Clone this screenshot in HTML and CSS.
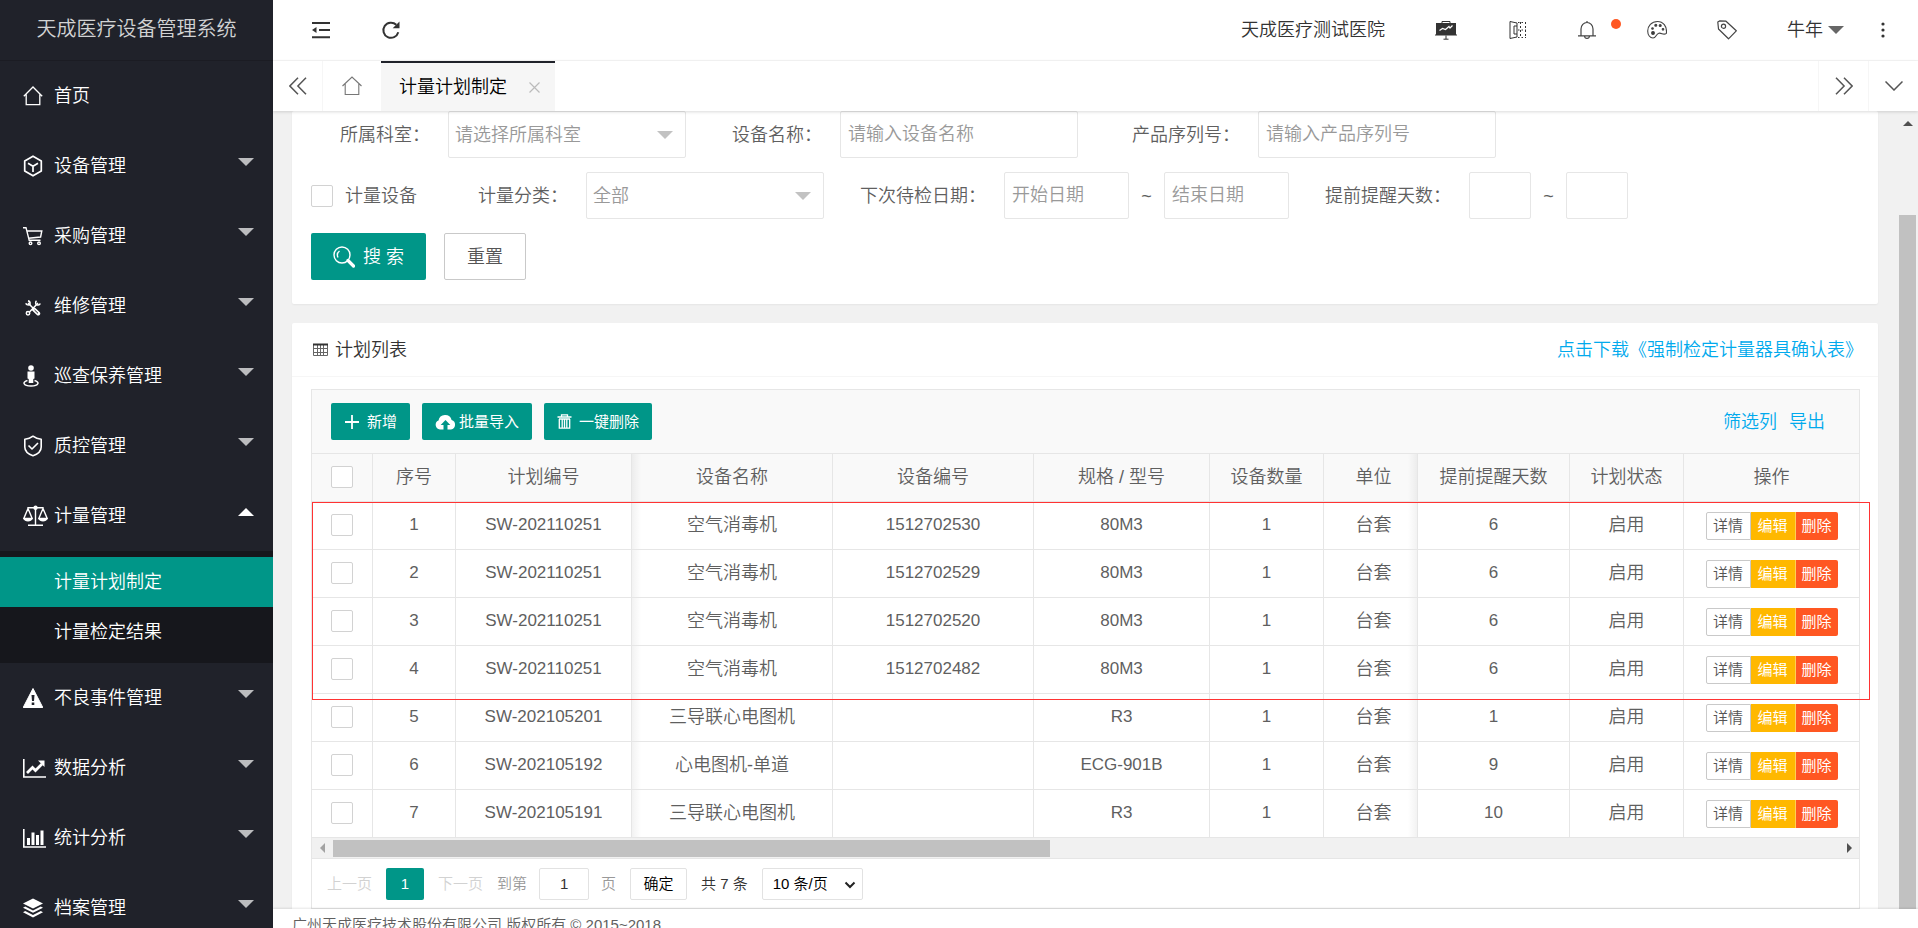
FILE: index.html
```html
<!DOCTYPE html>
<html lang="zh-CN">
<head>
  <meta charset="UTF-8">
  <meta name="viewport" content="width=device-width, initial-scale=1">
  <title>天成医疗设备管理系统</title>
  <link rel="stylesheet" href="styles.css">
</head>
<body>
<div class="app">

  <!-- Sidebar -->
  <aside class="sidebar">
    <div class="logo">天成医疗设备管理系统</div>
    <nav class="nav">
      <a class="nav-item" href="#">
        <span class="nav-icon"><svg width="20" height="20" viewBox="0 0 20 20" fill="none" stroke="#fff" stroke-width="1.3"><path d="M.8 10.2 10 1l9.200 9.200M3.200 8.500V18.700H16.800V8.500"/></svg></span>
        首页
      </a>
      <a class="nav-item" href="#">
        <span class="nav-icon"><svg width="20" height="22" viewBox="0 0 20 22" fill="none" stroke="#fff" stroke-width="1.7" stroke-linejoin="round"><path d="M10 1.200 18.300 6v10L10 20.800 1.700 16V6zM5 8.200l5 3 5-3M10 11.200V17"/></svg></span>
        设备管理<i class="caret"></i>
      </a>
      <a class="nav-item" href="#">
        <span class="nav-icon"><svg width="20" height="20" viewBox="0 0 20 20" fill="none" stroke="#fff" stroke-width="1.400"><path d="M0 1.700h3l3.200 12.600h11.300M4 5h14.800l-1.200 6L5.500 12.200"/><circle cx="7.500" cy="17.300" r="1.300"/><circle cx="16" cy="17.300" r="1.300"/></svg></span>
        采购管理<i class="caret"></i>
      </a>
      <a class="nav-item" href="#">
        <span class="nav-icon nav-icon-sm"><svg width="16" height="16" viewBox="0 0 16 16" fill="none" stroke="#fff" stroke-width="1.500"><path d="m3 3 5 5M13 3 4.500 12"/><path d="m9 9.500 4.200 4" stroke-width="4" stroke-linecap="round"/><path d="m9.500 10 3.500 3.300" stroke="#20222a" stroke-width="1"/><circle cx="3" cy="13.200" r="1.700"/><path d="M.8 3.200C1.500 5 3.500 5.500 5 4.300 5.300 2.800 4.500 1.200 3 .8M11.500.8c-1.500 1.500-1 3.700.8 4.200 1.200.3 2.500-.3 3-1.500"/></svg></span>
        维修管理<i class="caret"></i>
      </a>
      <a class="nav-item" href="#">
        <span class="nav-icon"><svg width="16" height="22" viewBox="0 0 16 22" fill="#fff"><circle cx="8" cy="3" r="2.800"/><path d="M4.500 6.500h7v7l-1.200.5V18H5.700v-4l-1.200-.5z"/><path d="M4.500 15.500C-1 16.800 0 21 8 21s9-4.200 3.500-5.500" fill="none" stroke="#fff" stroke-width="1.500"/></svg></span>
        巡查保养管理<i class="caret"></i>
      </a>
      <a class="nav-item" href="#">
        <span class="nav-icon"><svg width="20" height="22" viewBox="0 0 20 22" fill="none" stroke="#fff" stroke-width="1.600" stroke-linejoin="round"><path d="M10 1.200c2.500 2 5 2.800 8.200 3V12c0 4.500-4 7.300-8.200 8.800C5.800 19.300 1.800 16.500 1.800 12V4.200c3.200-.2 5.700-1 8.200-3z"/><path d="m5.500 10.500 3.500 3.500 6-6"/></svg></span>
        质控管理<i class="caret"></i>
      </a>
      <a class="nav-item" href="#">
        <span class="nav-icon"><svg width="25" height="22" viewBox="0 0 25 22" fill="none" stroke="#fff" stroke-width="1.400"><path d="M4.500 2.800h16M12.500 1v19M5 20.300h15"/><path d="M5 3.500.8 13.500h8.400zM20 3.500l-4.200 10h8.400z"/><path d="M.5 13.500c.5 4 8.500 4 9 0zM15.500 13.500c.5 4 8.500 4 9 0z" fill="#fff" stroke="none"/><circle cx="12.500" cy="2.800" r="1.500" fill="#fff"/></svg></span>
        计量管理<i class="caret caret-up"></i>
      </a>
      <div class="subnav">
        <a class="subnav-item active" href="#">计量计划制定</a>
        <a class="subnav-item" href="#">计量检定结果</a>
      </div>
      <a class="nav-item" href="#">
        <span class="nav-icon"><svg width="20" height="20" viewBox="0 0 20 20"><path d="M10 .5 19.800 19.500H.2z" fill="#fff" stroke="#fff" stroke-linejoin="round"/><path d="M8.500 7h3l-.5 6H9z" fill="#20222a"/><path d="M8.700 14.500h2.600V17H8.700z" fill="#20222a"/></svg></span>
        不良事件管理<i class="caret"></i>
      </a>
      <a class="nav-item" href="#">
        <span class="nav-icon"><svg width="23" height="20" viewBox="0 0 23 20" fill="none" stroke="#fff"><path d="M.8 1v18H23" stroke-width="1.600"/><path d="m4 15 5.500-5.500 3 3L19 6" stroke-width="2.800"/><path d="M15 2.500h6.500V9z" fill="#fff" stroke="none"/></svg></span>
        数据分析<i class="caret"></i>
      </a>
      <a class="nav-item" href="#">
        <span class="nav-icon"><svg width="23" height="20" viewBox="0 0 23 20"><path d="M.8 1v18H23" fill="none" stroke="#fff" stroke-width="1.600"/><path d="M4 10h3v7H4zM8.500 4.500h3V17h-3zM13 7h3v10h-3zM17.500 2.500h3V17h-3z" fill="#fff"/></svg></span>
        统计分析<i class="caret"></i>
      </a>
      <a class="nav-item" href="#">
        <span class="nav-icon"><svg width="20" height="20" viewBox="0 0 20 20" fill="#fff"><path d="m10 .5 10 5-10 5-10-5z"/><path d="m0 9.800 2.200-1.200L10 12.500l7.800-3.900L20 9.800l-10 5zM0 14.300l2.200-1.200L10 17l7.800-3.900 2.200 1.200-10 5.200z"/></svg></span>
        档案管理<i class="caret"></i>
      </a>
    </nav>
  </aside>

  <div class="main">

    <!-- Top bar -->
    <header class="header">
      <button class="header-btn" aria-label="收起菜单"><svg width="20" height="20" viewBox="0 0 20 20" fill="none" stroke="#333" stroke-width="2"><path d="M1 3h18M8 10h11M1 17.200h18"/><path d="M5.500 7v6L1 10z" fill="#333" stroke="none"/></svg></button>
      <button class="header-btn" aria-label="刷新"><svg width="20" height="20" viewBox="0 0 20 20" fill="none" stroke="#333" stroke-width="2"><path d="M17.300 12.300A7.600 7.600 0 1 1 15.300 4.800"/><path d="M18.500 1.500v6.800h-6.800z" fill="#333" stroke="none"/></svg></button>
      <div class="header-right">
        <a class="header-link" href="#">天成医疗测试医院</a>
        <button class="header-btn" aria-label="数据大屏"><svg width="22" height="20" viewBox="0 0 22 20"><path d="M1 3h20V14.500H22v1H0v-1h1z" fill="#333"/><path d="M7 3V1.500h8V3M11 15.500v3.500M8.500 19.200h5" fill="none" stroke="#333"/><path d="m4.500 10.500 3-2 3 1 3.500-3 1 1.500 2.500-2.500" fill="none" stroke="#fff" stroke-width="1.200"/></svg></button>
        <button class="header-btn" aria-label="对比"><svg width="20" height="20" viewBox="0 0 20 20" fill="none" stroke="#333"><path d="M3 1.500 10 3v14l-7 1.500zM10 6H7v8h3"/><path d="M13.500 2v16M18.500 2v16" stroke-dasharray="2 2"/><path d="M11 2.500h8M11 10h8M11 17.500h8" stroke-dasharray="1.500 2"/></svg></button>
        <button class="header-btn bell" aria-label="消息"><svg width="20" height="20" viewBox="0 0 20 20" fill="none" stroke="#444" stroke-width="1.200"><path d="M4 15.500V9a6 6.500 0 0 1 12 0v6.500M1 15.800h18M7.500 16c.3 3.200 4.700 3.200 5 0M10 2.500V1"/></svg><i class="dot"></i></button>
        <button class="header-btn" aria-label="主题"><svg width="20" height="20" viewBox="0 0 20 20" fill="none" stroke="#444" stroke-width="1.100"><path d="M19.400 13.300C20.200 6 16 1.500 10.500 1.500 4.500 1.500.7 6 .7 11c0 4 2.300 7 5.300 7 3.200 0 2.800-4 5.800-4.800 3-.7 4.600 2.600 7.600.1z"/><circle cx="6" cy="13" r="1.400" fill="#333"/><circle cx="5.500" cy="8.500" r=".8" fill="#333"/><circle cx="8.800" cy="5.200" r="1" fill="#333"/><circle cx="13.200" cy="5.500" r="1" fill="#333"/><circle cx="16" cy="9.300" r=".8" fill="#333"/></svg></button>
        <button class="header-btn" aria-label="便签"><svg width="20" height="20" viewBox="0 0 20 20" fill="none" stroke="#444" stroke-width="1.200" stroke-linejoin="round"><path d="M.8 2 2.500.9 9 1.200l10.300 9.600-7.800 8L1.500 9z"/><circle cx="6.500" cy="6.200" r="2.100"/></svg></button>
        <a class="header-link" href="#">牛年<i class="caret caret-dark"></i></a>
        <button class="header-more" aria-label="更多"><svg width="4" height="16" viewBox="0 0 4 16" fill="#333"><circle cx="2" cy="2" r="1.600"/><circle cx="2" cy="8" r="1.600"/><circle cx="2" cy="14" r="1.600"/></svg></button>
      </div>
    </header>

    <!-- Page tabs -->
    <div class="tabs">
      <button class="tab-ctrl tab-prev" aria-label="向左"><svg width="18" height="18" viewBox="0 0 18 18" fill="none" stroke="#555" stroke-width="1.500"><path d="M9 .8.900 9 9 17.200M17 .8 8.900 9l8.100 8.200"/></svg></button>
      <button class="tab-home" aria-label="首页"><svg width="20" height="20" viewBox="0 0 20 20" fill="none" stroke="#777" stroke-width="1.100"><path d="M.5 10 10 1l9.500 9M3.200 8v10.500h13.600V8"/></svg></button>
      <div class="tab active">计量计划制定<button class="tab-close" aria-label="关闭"><svg width="11" height="11" viewBox="0 0 11 11" stroke="#bbb" stroke-width="1.200"><path d="m.5.5 10 10M10.500.5l-10 10"/></svg></button></div>
      <button class="tab-ctrl tab-next" aria-label="向右"><svg width="18" height="18" viewBox="0 0 18 18" fill="none" stroke="#555" stroke-width="1.500"><path d="M1 .8 9.100 9 1 17.200M9 .8 17.100 9 9 17.200"/></svg></button>
      <button class="tab-ctrl" aria-label="标签操作"><svg width="18" height="10" viewBox="0 0 18 10" fill="none" stroke="#555" stroke-width="1.500"><path d="m.5.5 8.500 8.500L17.500.5"/></svg></button>
    </div>

    <div class="content">
      <div class="page">

        <!-- Search form -->
        <form class="card filter">
          <div class="filter-row">
            <div class="field">
              <label for="dept">所属科室：</label>
              <div class="select"><select id="dept"><option>请选择所属科室</option></select></div>
            </div>
            <div class="field">
              <label for="devName">设备名称：</label>
              <input class="input" type="text" id="devName" placeholder="请输入设备名称">
            </div>
            <div class="field field-wide">
              <label for="serial">产品序列号：</label>
              <input class="input" type="text" id="serial" placeholder="请输入产品序列号">
            </div>
          </div>
          <div class="filter-row">
            <label class="check-field"><input class="check" type="checkbox">计量设备</label>
            <div class="field">
              <label for="kind">计量分类：</label>
              <div class="select"><select id="kind"><option>全部</option></select></div>
            </div>
            <div class="field field-wide">
              <label for="dateFrom">下次待检日期：</label>
              <input class="input input-date" type="text" id="dateFrom" placeholder="开始日期">
              <span class="tilde">~</span>
              <input class="input input-date" type="text" placeholder="结束日期" aria-label="结束日期">
            </div>
            <div class="field field-wide">
              <label for="daysFrom">提前提醒天数：</label>
              <input class="input input-days" type="text" id="daysFrom">
              <span class="tilde">~</span>
              <input class="input input-days" type="text" aria-label="提醒天数上限">
            </div>
          </div>
          <div class="filter-row">
            <button class="btn" type="button"><svg width="22" height="22" viewBox="0 0 22 22" fill="none" stroke="#fff" stroke-width="1.400"><circle cx="9" cy="9" r="8"/><path d="M5 11.500c-1.200-2.500-.5-5 1.500-6.500"/><path d="m15 14.500 5.500 5.500" stroke-width="3.200" stroke-linecap="round"/></svg>搜 索</button>
            <button class="btn btn-plain" type="reset">重置</button>
          </div>
        </form>

        <!-- Plan list -->
        <section class="card">
          <div class="card-header">
            <svg width="16" height="14" viewBox="0 0 16 14" fill="none" stroke="#666"><path d="M.5 1.500h14v11H.5zM.5 5.500h14M.5 9.500h14M4.500 1.500v11M10.500 1.500v11M7.500 1.500v11"/><path d="M0 1.500h15" stroke="#333" stroke-width="2"/></svg>
            <h2>计划列表</h2>
            <a class="link download" href="#">点击下载《强制检定计量器具确认表》</a>
          </div>
          <div class="card-body">
            <div class="table-box">
              <div class="toolbar">
                <button class="btn-sm"><svg width="16" height="16" viewBox="0 0 16 16" stroke="#fff" stroke-width="1.800"><path d="M8 1v14M1 8h14"/></svg>新增</button>
                <button class="btn-sm btn-tight"><svg width="21" height="16" viewBox="0 0 21 16"><path d="M5 15.500a4.700 4.700 0 0 1-1.500-9A6.700 6.700 0 0 1 16.600 6 4.900 4.900 0 0 1 16 15.500h-3.500V11h2.800l-4.800-5-4.800 5h2.800v4.500z" fill="#fff"/></svg>批量导入</button>
                <button class="btn-sm"><svg width="15" height="15" viewBox="0 0 15 15" fill="none" stroke="#fff" stroke-width="1.300"><path d="M.5 3h14M4.500 3V.8h6V3M2.300 5v9.200h10.400V5M5.200 5v9M7.500 5v9M9.800 5v9M2 5h11"/></svg>一键删除</button>
                <div class="toolbar-right">
                  <a class="link" href="#">筛选列</a>
                  <a class="link" href="#">导出</a>
                </div>
              </div>

              <div class="table-wrap">
                <table class="table">
                  <colgroup>
                    <col class="c-check"><col class="c-no"><col class="c-plan"><col class="c-name"><col class="c-name">
                    <col class="c-plan"><col class="c-qty"><col class="c-unit"><col class="c-days"><col class="c-qty"><col class="c-ops">
                  </colgroup>
                  <thead>
                    <tr>
                      <th><input class="check" type="checkbox" aria-label="全选"></th>
                      <th>序号</th><th>计划编号</th><th class="shade-left">设备名称</th><th>设备编号</th><th>规格 / 型号</th>
                      <th>设备数量</th><th class="shade-right">单位</th><th>提前提醒天数</th><th>计划状态</th><th>操作</th>
                    </tr>
                  </thead>
                  <tbody>
                    <tr>
                      <td><input class="check" type="checkbox" aria-label="选择第1行"></td>
                      <td class="num">1</td><td class="num">SW-202110251</td><td class="shade-left">空气消毒机</td><td class="num">1512702530</td><td class="num">80M3</td>
                      <td class="num">1</td><td class="shade-right">台套</td><td class="num">6</td><td>启用</td>
                      <td><div class="ops"><button class="op">详情</button><button class="op op-edit">编辑</button><button class="op op-del">删除</button></div></td>
                    </tr>
                    <tr>
                      <td><input class="check" type="checkbox" aria-label="选择第2行"></td>
                      <td class="num">2</td><td class="num">SW-202110251</td><td class="shade-left">空气消毒机</td><td class="num">1512702529</td><td class="num">80M3</td>
                      <td class="num">1</td><td class="shade-right">台套</td><td class="num">6</td><td>启用</td>
                      <td><div class="ops"><button class="op">详情</button><button class="op op-edit">编辑</button><button class="op op-del">删除</button></div></td>
                    </tr>
                    <tr>
                      <td><input class="check" type="checkbox" aria-label="选择第3行"></td>
                      <td class="num">3</td><td class="num">SW-202110251</td><td class="shade-left">空气消毒机</td><td class="num">1512702520</td><td class="num">80M3</td>
                      <td class="num">1</td><td class="shade-right">台套</td><td class="num">6</td><td>启用</td>
                      <td><div class="ops"><button class="op">详情</button><button class="op op-edit">编辑</button><button class="op op-del">删除</button></div></td>
                    </tr>
                    <tr>
                      <td><input class="check" type="checkbox" aria-label="选择第4行"></td>
                      <td class="num">4</td><td class="num">SW-202110251</td><td class="shade-left">空气消毒机</td><td class="num">1512702482</td><td class="num">80M3</td>
                      <td class="num">1</td><td class="shade-right">台套</td><td class="num">6</td><td>启用</td>
                      <td><div class="ops"><button class="op">详情</button><button class="op op-edit">编辑</button><button class="op op-del">删除</button></div></td>
                    </tr>
                    <tr>
                      <td><input class="check" type="checkbox" aria-label="选择第5行"></td>
                      <td class="num">5</td><td class="num">SW-202105201</td><td class="shade-left">三导联心电图机</td><td></td><td class="num">R3</td>
                      <td class="num">1</td><td class="shade-right">台套</td><td class="num">1</td><td>启用</td>
                      <td><div class="ops"><button class="op">详情</button><button class="op op-edit">编辑</button><button class="op op-del">删除</button></div></td>
                    </tr>
                    <tr>
                      <td><input class="check" type="checkbox" aria-label="选择第6行"></td>
                      <td class="num">6</td><td class="num">SW-202105192</td><td class="shade-left">心电图机-单道</td><td></td><td class="num">ECG-901B</td>
                      <td class="num">1</td><td class="shade-right">台套</td><td class="num">9</td><td>启用</td>
                      <td><div class="ops"><button class="op">详情</button><button class="op op-edit">编辑</button><button class="op op-del">删除</button></div></td>
                    </tr>
                    <tr>
                      <td><input class="check" type="checkbox" aria-label="选择第7行"></td>
                      <td class="num">7</td><td class="num">SW-202105191</td><td class="shade-left">三导联心电图机</td><td></td><td class="num">R3</td>
                      <td class="num">1</td><td class="shade-right">台套</td><td class="num">10</td><td>启用</td>
                      <td><div class="ops"><button class="op">详情</button><button class="op op-edit">编辑</button><button class="op op-del">删除</button></div></td>
                    </tr>
                  </tbody>
                </table>
                <div class="mark"></div>
              </div>

              <div class="hscroll">
                <i class="arrow arrow-left"></i>
                <div class="hscroll-track"><div class="hscroll-thumb"></div></div>
                <i class="arrow arrow-right"></i>
              </div>

              <div class="pager">
                <span class="pager-off">上一页</span>
                <button class="pager-num">1</button>
                <span class="pager-off">下一页</span>
                <label class="pager-skip">到第<input type="text" value="1">页</label>
                <button class="pager-ok">确定</button>
                <span class="pager-total">共 7 条</span>
                <div class="pager-limit">
                  <select aria-label="每页条数"><option>10 条/页</option></select>
                  <svg width="12" height="8" viewBox="0 0 12 8" fill="none" stroke="#222" stroke-width="2"><path d="m1.500 1.500 4.500 4.500 4.500-4.500"/></svg>
                </div>
              </div>
            </div>
          </div>
        </section>
      </div>

      <div class="vscroll">
        <i class="arrow arrow-up"></i>
        <div class="vscroll-thumb"></div>
      </div>
    </div>

    <footer class="footer">广州天成医疗技术股份有限公司 版权所有 © 2015~2018</footer>
  </div>
</div>
</body>
</html>
```

FILE: styles.css
```css
* {
  box-sizing: border-box;
}

body {
  margin: 0;
  color: #5f5f5f;
  font-family: "Liberation Sans", "Noto Sans CJK SC", sans-serif;
  font-size: 18px;
  font-weight: 350;
  line-height: 24px;
}

a {
  color: inherit;
  text-decoration: none;
}

button,
input,
select {
  margin: 0;
  font: inherit;
  color: inherit;
  outline: none;
}

button {
  padding: 0;
  border: none;
  background: none;
  cursor: pointer;
}

svg {
  display: block;
  flex: none;
}

.app {
  display: flex;
  height: 100vh;
  overflow: hidden;
}

/* sidebar */
.sidebar {
  flex: none;
  width: 273px;
  background: #20222a;
  color: #fff;
  overflow: hidden;
}

.logo {
  height: 61px;
  padding-bottom: 2px;
  display: flex;
  align-items: center;
  justify-content: center;
  font-size: 20px;
  color: #d2d3d4;
  border-bottom: 1px solid #1b1c23;
}

.nav-item {
  display: flex;
  align-items: center;
  height: 70px;
  padding: 0 19px 0 23px;
}

.nav-icon {
  flex: none;
  width: 31px;
}

.nav-icon-sm {
  padding: 3px 0 0 2px;
}

.caret {
  flex: none;
  margin: 0 0 8px auto;
  border: 8px solid transparent;
  border-top-color: #bcbdbf;
  border-bottom-width: 0;
}

.caret-up {
  border-width: 0 8px 8px;
  border-bottom-color: #fff;
}

.caret-dark {
  margin: 0 0 0 5px;
  border-top-color: #666;
}

.subnav {
  padding: 6px 0;
  background: #16171c;
}

.subnav-item {
  display: block;
  padding-left: 54px;
  line-height: 50px;
}

.subnav-item.active {
  background: #009688;
}

/* header */
.main {
  flex: 1;
  min-width: 0;
  display: flex;
  flex-direction: column;
}

.header {
  flex: none;
  display: flex;
  height: 61px;
  padding: 0 0 1px 13px;
  border-bottom: 1px solid #f6f6f6;
  color: #333;
}

.header-btn,
.header-link {
  display: flex;
  align-items: center;
  padding: 0 25px;
}

.header-right {
  display: flex;
  margin-left: auto;
}

.header-more {
  width: 49px;
  padding-left: 12px;
}

.bell {
  position: relative;
}

.dot {
  position: absolute;
  top: 19px;
  right: 1px;
  width: 10px;
  height: 10px;
  border-radius: 50%;
  background: #ff5722;
}

/* tabs */
.tabs {
  position: relative;
  z-index: 1;
  flex: none;
  display: flex;
  height: 50px;
  background: #fff;
  box-shadow: 0 1px 3px rgba(0, 0, 0, 0.15);
}

.tab-ctrl {
  display: flex;
  align-items: center;
  justify-content: center;
  width: 50px;
  border-left: 1px solid #f6f6f6;
}

.tab-prev {
  width: 49px;
  border-left: none;
}

.tab-home {
  display: flex;
  align-items: center;
  justify-content: center;
  width: 59px;
  border-left: 1px solid #f6f6f6;
}

.tab {
  display: flex;
  align-items: center;
  padding: 0 15px 0 18px;
  border-top: 2px solid #20222a;
  background: #f6f6f6;
  color: #000;
}

.tab-close {
  margin-left: 22px;
}

.tab-next {
  margin-left: auto;
}

/* content */
.content {
  flex: 1;
  min-height: 0;
  display: flex;
  background: #f1f1f1;
}

.page {
  flex: 1;
  min-width: 0;
  padding: 0 19px;
  overflow: hidden;
}

.card {
  border-radius: 2px;
  background: #fff;
  box-shadow: 0 1px 2px rgba(0, 0, 0, 0.05);
}

.filter {
  display: flex;
  flex-direction: column;
  gap: 14px;
  padding: 0 19px 24px;
  margin-bottom: 19px;
}

.filter-row {
  display: flex;
}

.field {
  display: flex;
  align-items: center;
  margin-right: 12px;
}

.field label {
  width: 142px;
  padding-right: 18px;
  text-align: right;
}

.field:first-child label {
  width: 137px;
}

.field-wide label {
  width: 168px;
}

.input,
.select select {
  width: 238px;
  height: 47px;
  padding: 0 7px;
  border: 1px solid #e6e6e6;
  border-radius: 2px;
  background: #fff;
}

.input::placeholder {
  color: #999;
  opacity: 1;
}

.input.input-date {
  width: 125px;
}

.input.input-days {
  width: 62px;
}

.tilde {
  width: 35px;
  text-align: center;
}

.select {
  position: relative;
}

.select select {
  display: block;
  padding: 0 6px;
  appearance: none;
  color: #999;
}

.select::after {
  content: "";
  position: absolute;
  top: 20px;
  right: 13px;
  border: 8px solid transparent;
  border-top-color: #c2c2c2;
  border-bottom-width: 0;
  pointer-events: none;
}

.check {
  display: block;
  appearance: none;
  width: 22px;
  height: 22px;
  border: 1px solid #d2d2d2;
  border-radius: 2px;
  background: #fff;
}

.check-field {
  display: flex;
  align-items: center;
  gap: 12px;
  width: 133px;
}

.btn {
  display: flex;
  align-items: center;
  gap: 8px;
  height: 47px;
  padding: 0 22px;
  margin-right: 18px;
  border-radius: 2px;
  background: #009688;
  color: #fff;
}

.btn-plain {
  border: 1px solid #c9c9c9;
  background: #fff;
  color: #555;
}

.card-header {
  display: flex;
  align-items: center;
  gap: 6px;
  height: 54px;
  padding: 0 15px 0 21px;
  border-bottom: 1px solid #f6f6f6;
  color: #333;
}

.card-header h2 {
  margin: 0;
  font-size: 18px;
  font-weight: 350;
}

.link {
  color: #01aaed;
}

.download {
  margin-left: auto;
}

.card-body {
  padding: 12px 18px 12px 19px;
}

/* table */
.table-box {
  border: 1px solid #e6e6e6;
}

.toolbar {
  display: flex;
  align-items: center;
  gap: 12px;
  height: 64px;
  padding: 0 34px 0 19px;
  border-bottom: 1px solid #e6e6e6;
  background: #f9f9f9;
}

.btn-sm {
  display: flex;
  align-items: center;
  gap: 7px;
  height: 37px;
  padding: 0 13px;
  border-radius: 2px;
  background: #009688;
  color: #fff;
  font-size: 15px;
  font-weight: 400;
}

.btn-tight {
  gap: 3px;
}

.toolbar-right {
  display: flex;
  gap: 12px;
  margin-left: auto;
}

.table-wrap {
  position: relative;
}

.table {
  width: 100%;
  table-layout: fixed;
  border-collapse: separate;
  border-spacing: 0;
}

.c-check { width: 61px; }
.c-no { width: 83px; }
.c-plan { width: 176px; }
.c-name { width: 201px; }
.c-qty { width: 114px; }
.c-unit { width: 94px; }
.c-days { width: 152px; }
.c-ops { width: 175px; }

.table th,
.table td {
  height: 48px;
  padding: 0 0 2px;
  border-right: 1px solid #e6e6e6;
  border-bottom: 1px solid #e6e6e6;
  font-weight: 350;
  text-align: center;
}

.table th {
  background-color: #f9f9f9;
}

.table th:last-child,
.table td:last-child {
  border-right: none;
}

.table .num {
  font-size: 17px;
}

.table .check {
  margin: 0 auto;
}

.table .shade-left {
  background-image: linear-gradient(to right, rgba(0, 0, 0, 0.05), transparent 9px);
}

.table .shade-right {
  padding-left: 6px;
  background-image: linear-gradient(to left, rgba(0, 0, 0, 0.05), transparent 9px);
}

.ops {
  display: flex;
  justify-content: center;
  padding-top: 2px;
}

.op {
  width: 45px;
  height: 28px;
  border: 1px solid #c9c9c9;
  border-radius: 2px 0 0 2px;
  font-size: 15px;
  line-height: 24px;
  color: #555;
}

.op-edit {
  border-width: 0 1px 0 0;
  border-color: #ffcf55;
  border-radius: 0;
  background: #ffb800;
  color: #fff;
  font-weight: 400;
}

.op-del {
  width: 42px;
  border: none;
  border-radius: 0 2px 2px 0;
  background: #ff5722;
  color: #fff;
  font-weight: 400;
}

.mark {
  position: absolute;
  top: 48px;
  left: 0;
  right: -11px;
  height: 198px;
  border: 1px solid #f33;
  pointer-events: none;
}

/* scrollbars */
.arrow {
  flex: none;
  border: 5px solid transparent;
}

.arrow-left {
  border-right-color: #a3a3a3;
  border-left-width: 0;
}

.arrow-right {
  border-left-color: #505050;
  border-right-width: 0;
}

.arrow-up {
  border-bottom-color: #505050;
  border-top-width: 0;
}

.hscroll {
  display: flex;
  align-items: center;
  gap: 8px;
  height: 21px;
  padding: 0 7px 0 8px;
  border-bottom: 1px solid #e6e6e6;
  background: #f1f1f1;
}

.hscroll-track {
  flex: 1;
}

.hscroll-thumb {
  width: 717px;
  max-width: 100%;
  height: 17px;
  background: #c1c1c1;
}

.vscroll {
  flex: none;
  display: flex;
  flex-direction: column;
  align-items: center;
  gap: 89px;
  width: 21px;
  padding-top: 10px;
}

.vscroll-thumb {
  flex: 1;
  width: 17px;
  background: #c1c1c1;
}

/* pager */
.pager {
  display: flex;
  align-items: center;
  gap: 14px;
  height: 49px;
  padding-left: 15px;
  color: #333;
  font-size: 15px;
}

.pager-off {
  color: #d2d2d2;
}

.pager-num {
  width: 38px;
  height: 32px;
  border-radius: 2px;
  background: #009688;
  color: #fff;
}

.pager-skip {
  display: flex;
  align-items: center;
  gap: 12px;
  color: #999;
}

.pager-skip input {
  width: 50px;
  height: 32px;
  border: 1px solid #e2e2e2;
  border-radius: 2px;
  text-align: center;
  color: #333;
}

.pager-ok {
  width: 57px;
  height: 32px;
  border: 1px solid #e2e2e2;
  border-radius: 2px;
  color: #000;
}

.pager-limit {
  position: relative;
}

.pager-limit select {
  display: block;
  appearance: none;
  width: 101px;
  height: 32px;
  padding: 0 10px;
  border: 1px solid #e2e2e2;
  border-radius: 2px;
  background: #fff;
  color: #000;
}

.pager-limit svg {
  position: absolute;
  top: 13px;
  right: 7px;
  pointer-events: none;
}

.footer {
  position: relative;
  flex: none;
  height: 19px;
  padding: 4px 19px 0;
  overflow: hidden;
  background: #fff;
  box-shadow: 0 -1px 2px rgba(0, 0, 0, 0.1);
  font-size: 15px;
  white-space: nowrap;
}
```
